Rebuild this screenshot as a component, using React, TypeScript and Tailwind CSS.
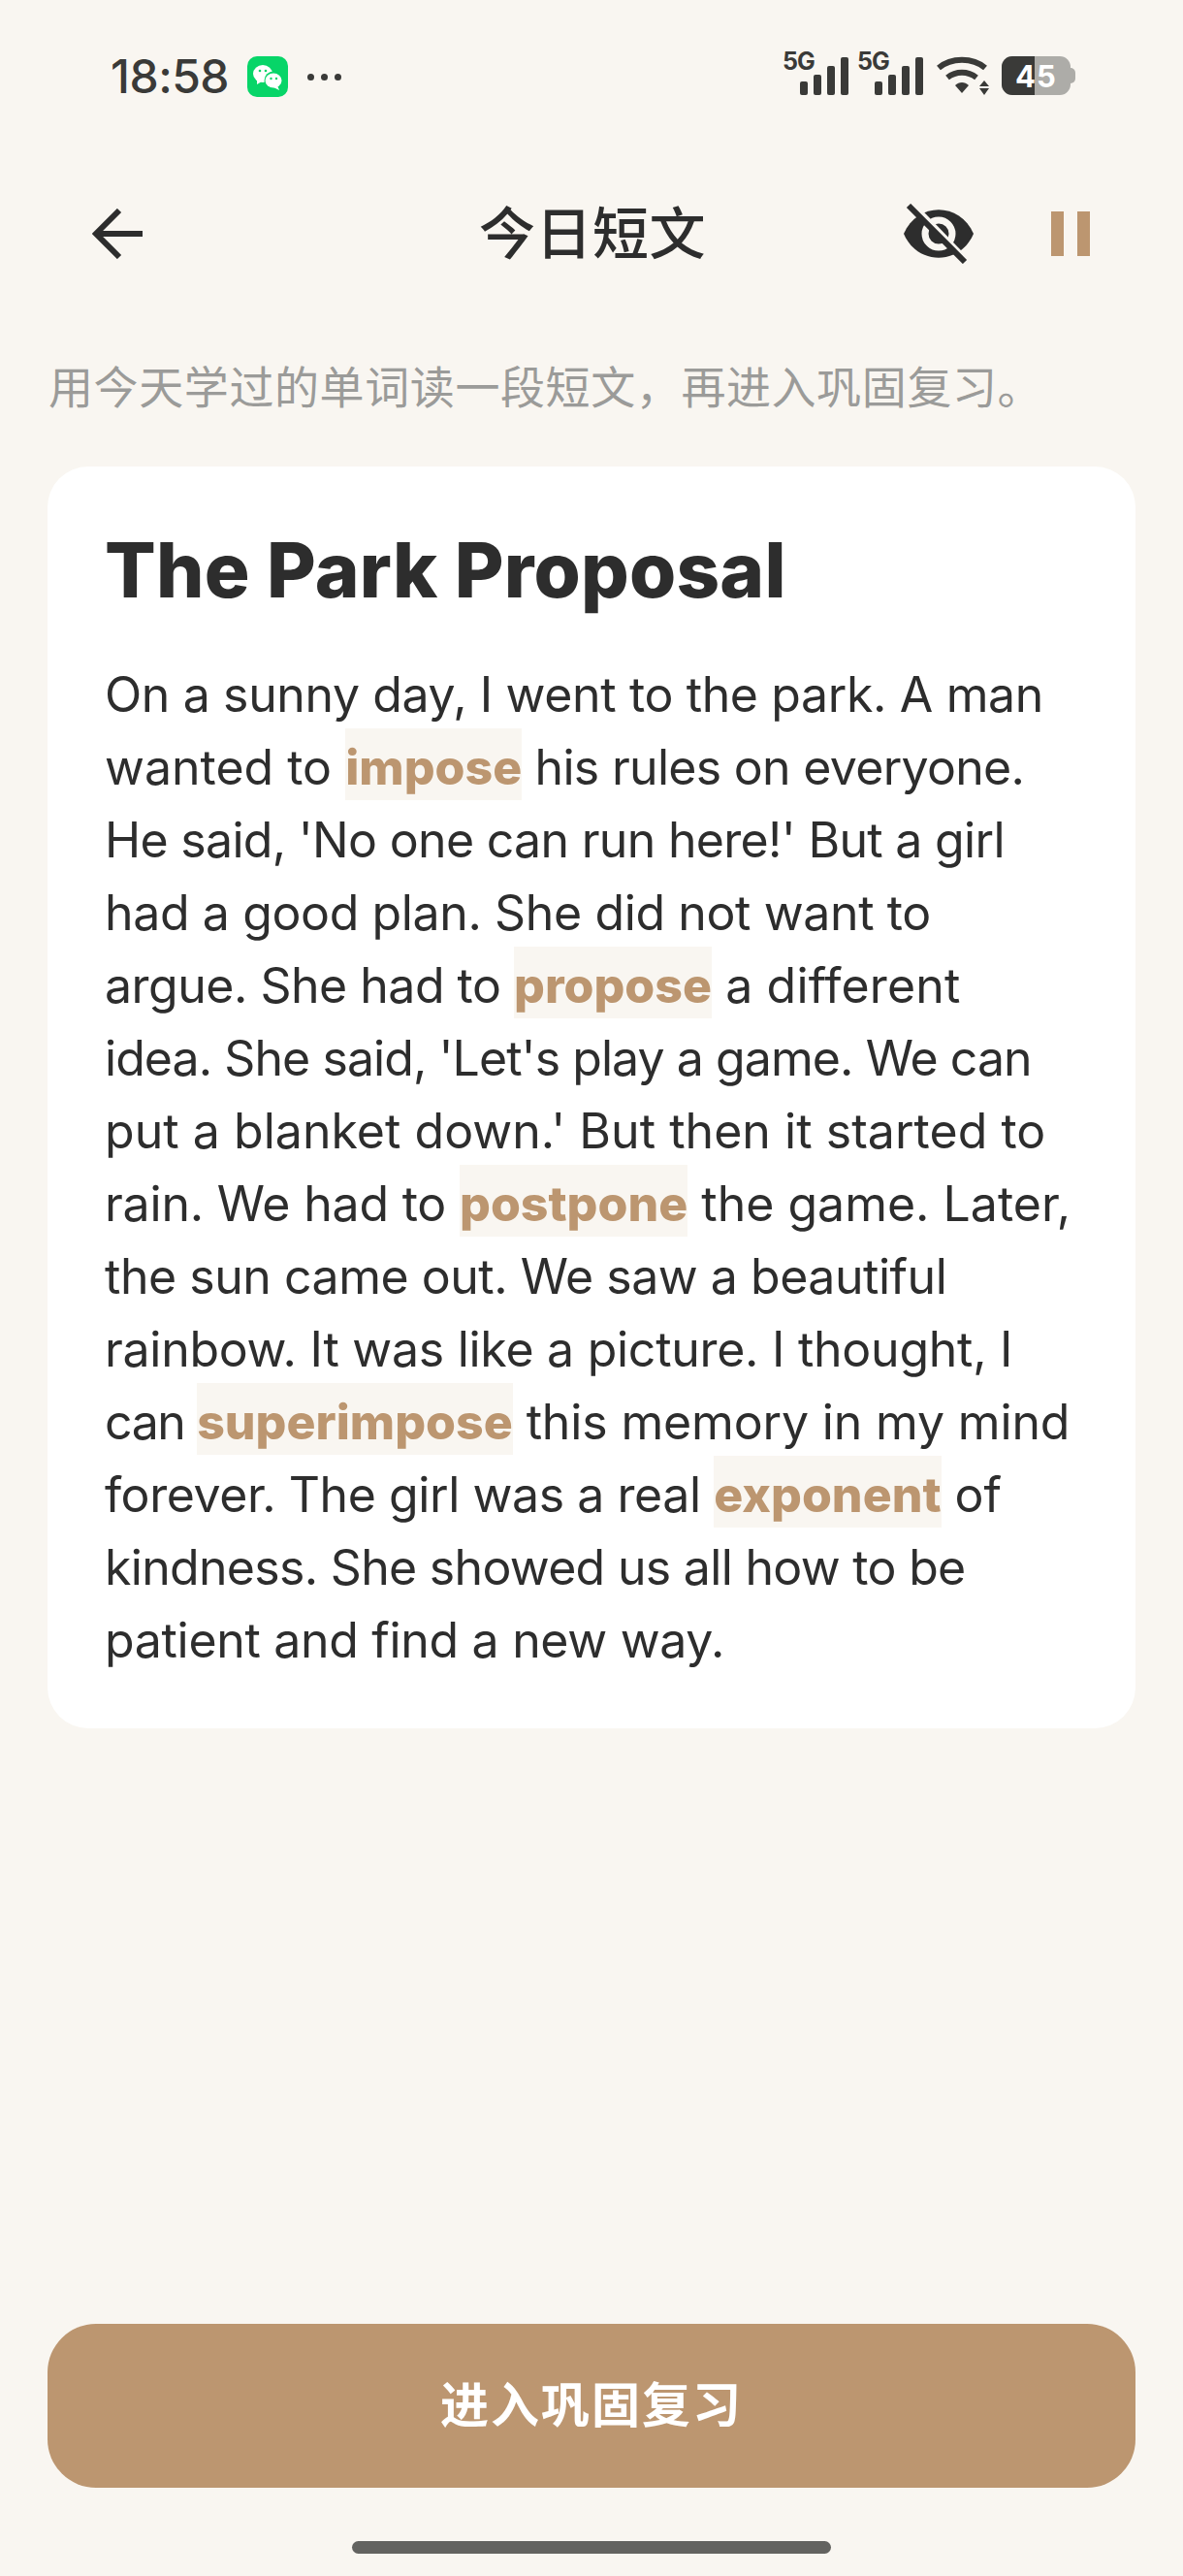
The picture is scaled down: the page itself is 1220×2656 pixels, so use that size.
// per-line tracking stands in for the phone font's slightly different letter widths
const lines: { text: string; track: string; word?: string; after?: string; afterTrack?: string }[] = [
  { text: "On a sunny day, I went to the park. A man", track: "tracking-[-0.37px]" },
  { text: "wanted to ", track: "tracking-[0px]", word: "impose", after: " his rules on everyone.", afterTrack: "tracking-[-0.7px]" },
  { text: "He said, 'No one can run here!' But a girl", track: "tracking-[-0.69px]" },
  { text: "had a good plan. She did not want to", track: "tracking-[-0.38px]" },
  { text: "argue. She had to ", track: "tracking-[-0.5px]", word: "propose", after: " a different", afterTrack: "tracking-[0.14px]" },
  { text: "idea. She said, 'Let's play a game. We can", track: "tracking-[-0.93px]" },
  { text: "put a blanket down.' But then it started to", track: "tracking-[0.04px]" },
  { text: "rain. We had to ", track: "tracking-[-0.2px]", word: "postpone", after: " the game. Later,", afterTrack: "tracking-[0px]" },
  { text: "the sun came out. We saw a beautiful", track: "tracking-[-0.47px]" },
  { text: "rainbow. It was like a picture. I thought, I", track: "tracking-[-0.27px]" },
  { text: "can ", track: "tracking-[-1.4px]", word: "superimpose", after: " this memory in my mind", afterTrack: "tracking-[-0.15px]" },
  { text: "forever. The girl was a real ", track: "tracking-[-0.43px]", word: "exponent", after: " of", afterTrack: "tracking-[0px]" },
  { text: "kindness. She showed us all how to be", track: "tracking-[-0.69px]" },
  { text: "patient and find a new way.", track: "tracking-[-0.31px]" },
];

function Signal() {
  return (
    <div className="relative h-[44px] w-[68px]">
      <span className="absolute left-0 top-[-3px] text-[25px] leading-[25px] font-bold tracking-[-1px] text-[#3a3a38]">5G</span>
      <svg className="absolute left-[18px] top-[5px]" width="50" height="39" viewBox="0 0 50 39" fill="#3a3a38">
        <rect x="0" y="25" width="8" height="14" rx="2" />
        <rect x="14" y="18" width="8" height="21" rx="2" />
        <rect x="28" y="9" width="8" height="30" rx="2" />
        <rect x="42" y="0" width="8" height="39" rx="2" />
      </svg>
    </div>
  );
}

function Wechat() {
  return (
    <svg width="42" height="42" viewBox="0 0 42 42">
      <rect width="42" height="42" rx="10" fill="#07d568" />
      <ellipse cx="16" cy="18" rx="10" ry="9" fill="#fff" />
      <path d="M10 24 L10 29 L15 26 Z" fill="#fff" />
      <circle cx="27" cy="25" r="9.5" fill="#07d568" />
      <ellipse cx="27" cy="25" rx="8.5" ry="7.5" fill="#fff" />
      <path d="M31 30 L33 35 L27 32 Z" fill="#fff" />
      <circle cx="13" cy="15" r="1.3" fill="#07d568" />
      <circle cx="19" cy="15" r="1.3" fill="#07d568" />
      <circle cx="24.5" cy="23" r="1.2" fill="#07d568" />
      <circle cx="30" cy="23" r="1.2" fill="#07d568" />
    </svg>
  );
}

function StatusBar() {
  return (
    <div className="flex h-[175px] items-start justify-between pl-[114px] pr-[111px] pt-[54px] text-[#3a3a38]">
      <div className="flex items-center">
        <span className="w-[122px] text-[48px] leading-[50px] font-medium tracking-[-0.5px]">18:58</span>
        <span className="ml-[19px]"><Wechat /></span>
        <div className="ml-[20px] flex gap-[7px]">
          <span className="size-[7px] rounded-full bg-[#3a3a38]" />
          <span className="size-[7px] rounded-full bg-[#3a3a38]" />
          <span className="size-[7px] rounded-full bg-[#3a3a38]" />
        </div>
      </div>
      <div className="flex items-end">
        <Signal />
        <div className="ml-[9px]"><Signal /></div>
        <svg className="ml-[14px]" width="54" height="40" viewBox="0 0 54 40" fill="none">
          <path d="M2 12 C15 1 37 1 50 12" stroke="#3a3a38" strokeWidth="6" />
          <path d="M11 22 C20 15 32 15 41 22" stroke="#3a3a38" strokeWidth="6" />
          <path d="M19 30 C23 26 29 26 33 30 L26 38 Z" fill="#3a3a38" />
          <path d="M49 25 L54 31 L44 31 Z M44 33 L54 33 L49 40 Z" fill="#3a3a38" />
        </svg>
        <div className="relative ml-[13px] flex h-[40px] w-[71px] items-center justify-center overflow-hidden rounded-[11px] bg-[#adaca8]">
          <span className="absolute inset-y-0 left-0 w-[34px] bg-[#3a3a38]" />
          <span className="relative text-[31px] leading-none font-bold tracking-[1px] text-white">45</span>
        </div>
        <span className="mb-[12px] h-[16px] w-[5px] rounded-r-full bg-[#adaca8]" />
      </div>
    </div>
  );
}

export default function App() {
  return (
    <div
      className="flex h-[2656px] w-[1220px] flex-col overflow-hidden bg-[#f9f6f1] text-[#2d2d2d]"
      style={{ fontFamily: "Inter, 'Noto Sans CJK SC', sans-serif" }}
    >
      <StatusBar />

      <div className="relative flex h-[186px] items-center pb-[54px] pl-[95px] pr-[96px]">
        <svg width="54" height="52" viewBox="0 0 54 52" fill="none" stroke="#2d2d2d" strokeWidth="6">
          <path d="M52 26 H4" />
          <path d="M28 2 L4 26 L28 50" />
        </svg>
        <h1 className="ml-[345px] text-[58px] leading-none font-medium tracking-[0.5px]">今日短文</h1>
        <svg className="ml-[204px]" width="72" height="62" viewBox="0 0 72 62">
          <path d="M0 31 C14 -2 58 -2 72 31 C58 64 14 64 0 31 Z" fill="#2d2d2d" />
          <circle cx="36" cy="31" r="14" fill="none" stroke="#f9f6f1" strokeWidth="7" />
          <path d="M9 0 L67 60" stroke="#f9f6f1" strokeWidth="5" />
          <path d="M5 2 L63 60" stroke="#2d2d2d" strokeWidth="6" />
        </svg>
        <svg className="ml-auto" width="40" height="46" viewBox="0 0 40 46" fill="#bc9670">
          <rect width="13" height="46" />
          <rect x="27" width="13" height="46" />
        </svg>
      </div>

      <p className="pl-[50px] text-[46px] leading-[76px] tracking-[0.6px] text-[#9b9b99]">用今天学过的单词读一段短文，再进入巩固复习。</p>

      <div className="mx-[49px] mt-[44px] h-[1301px] rounded-[42px] bg-white pl-[59px] pt-[57px]">
        <h2 className="text-[78px] leading-[100px] font-extrabold tracking-[0.2px]">The Park Proposal</h2>
        <div className="mt-[41px] text-[50px] leading-[75px]">
          {lines.map((line) => (
            <div key={line.text} className="h-[75px] whitespace-pre">
              <span className={line.track}>{line.text}</span>
              {line.word && (
                <span className="bg-[#f9f6f1] pt-[10px] pb-[4px] font-extrabold text-[#bc9670]">{line.word}</span>
              )}
              <span className={line.afterTrack}>{line.after}</span>
            </div>
          ))}
        </div>
      </div>

      <div className="flex-1" />

      <button className="mx-[49px] flex h-[169px] items-center justify-center rounded-[50px] bg-[#bc9670] text-[50px] font-bold tracking-[2px] text-white">
        进入巩固复习
      </button>
      <div className="mt-[55px] mb-[23px] h-[13px] w-[494px] self-center rounded-full bg-[#636360]" />
    </div>
  );
}
